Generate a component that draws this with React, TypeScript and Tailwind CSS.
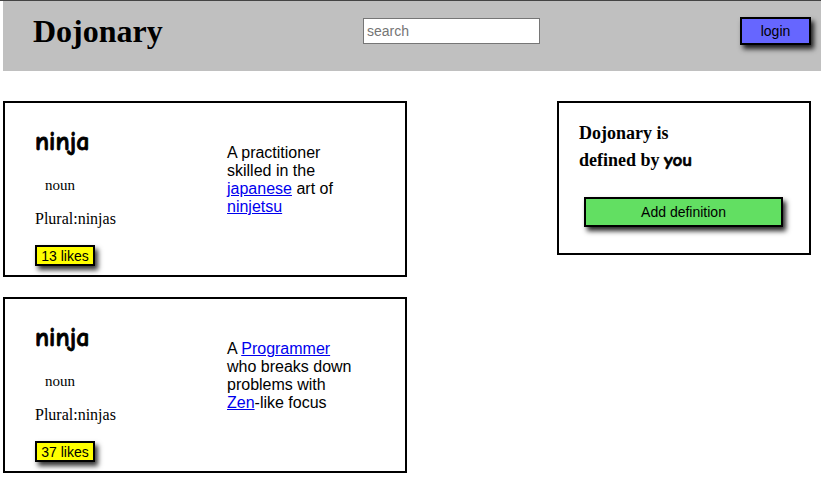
const serif = "font-['Liberation_Serif','Times_New_Roman',serif]";
const sans = "font-['Liberation_Sans',Arial,sans-serif]";
const comic = "font-['Comic_Sans_MS','Comic_Neue',cursive]";

type Word = {
  likes: number;
  def: React.ReactNode;
};

const words: Word[] = [
  {
    likes: 13,
    def: (
      <>
        A practitioner skilled in the <a href="#" className="text-[#0000ee] underline">japanese</a> art of{" "}
        <a href="#" className="text-[#0000ee] underline">ninjetsu</a>
      </>
    ),
  },
  {
    likes: 37,
    def: (
      <>
        A <a href="#" className="text-[#0000ee] underline">Programmer</a> who breaks down problems with{" "}
        <a href="#" className="text-[#0000ee] underline">Zen</a>-like focus
      </>
    ),
  },
];

function Card({ w }: { w: Word }) {
  return (
    <div className="flex h-[176px] w-[404px] border-2 border-black bg-white">
      <div className="w-[190px] pl-[30px] pt-[24px]">
        <div className={`${comic} text-[26px] font-bold leading-[30px] text-black [-webkit-text-stroke:0.8px_black]`}>ninja</div>
        <div className={`${serif} mt-[19px] pl-[10px] text-[15px] leading-[18px]`}>noun</div>
        <div className={`${serif} mt-[16px] text-[16px] leading-[18px]`}>Plural:ninjas</div>
        <button
          className={`${sans} mt-[17px] h-[21px] w-[60px] border-2 border-black bg-[#ffff00] text-[14px] leading-[16px] text-black shadow-[3px_4px_5px_rgba(0,0,0,0.8)]`}
        >
          {w.likes} likes
        </button>
      </div>
      <div className={`${sans} w-[132px] pt-[41px] pl-[32px] text-[16px] leading-[18px] text-black box-content`}>
        {w.def}
      </div>
    </div>
  );
}

export default function App() {
  return (
    <div className="min-h-[487px] w-[821px] bg-white">
      <div className="h-px bg-[#444]" />
      <div className="ml-[3px] flex h-[70px] items-start bg-[#c0c0c0]">
        <div className={`${serif} ml-[30px] mt-[12px] w-[330px] text-[32px] font-bold leading-[36px] text-black`}>
          Dojonary
        </div>
        <input
          placeholder="search"
          className={`${sans} mt-[17px] h-[26px] w-[177px] border border-[#767676] bg-white px-[3px] text-[14px] text-black placeholder:text-[#757575] outline-none`}
        />
        <button
          className={`${sans} ml-[200px] mt-[16px] h-[28px] w-[71px] border-2 border-black bg-[#6666ff] text-[14px] text-black shadow-[3px_4px_5px_rgba(0,0,0,0.85)]`}
        >
          login
        </button>
      </div>
      <div className="mt-[30px] flex">
        <div className="ml-[3px] flex flex-col gap-[20px]">
          {words.map((w, i) => (
            <Card key={i} w={w} />
          ))}
        </div>
        <div className="ml-[150px] h-[154px] w-[254px] border-2 border-black bg-white pl-[20px] pt-[17px]">
          <div className={`${serif} text-[18px] font-bold leading-[27px] text-black`}>
            Dojonary is
            <br />
            defined by <span className={`${comic} text-[19px] [-webkit-text-stroke:0.7px_black]`}>you</span>
          </div>
          <button
            className={`${sans} ml-[5px] mt-[23px] h-[30px] w-[199px] border-2 border-black bg-[#62df62] text-[14px] text-black shadow-[3px_4px_5px_rgba(0,0,0,0.85)]`}
          >
            Add definition
          </button>
        </div>
      </div>
    </div>
  );
}
